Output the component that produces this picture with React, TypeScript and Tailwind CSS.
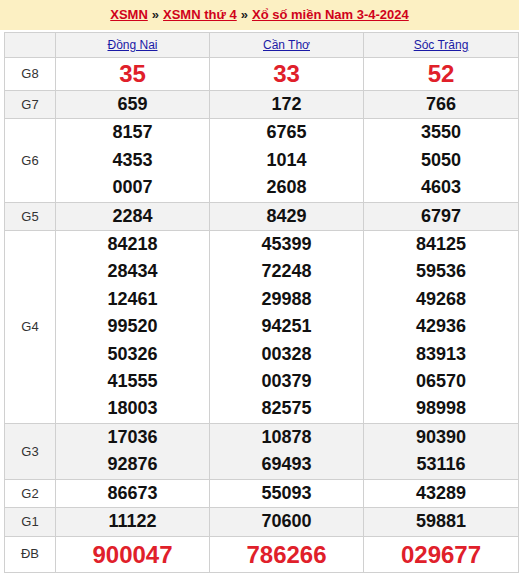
import React from "react";

type Row = {
  label: string;
  values: string[][];
  big?: boolean;
  special?: boolean;
};

const rows: Row[] = [
  { label: "G8", values: [["35"], ["33"], ["52"]], big: true },
  { label: "G7", values: [["659"], ["172"], ["766"]] },
  {
    label: "G6",
    values: [
      ["8157", "4353", "0007"],
      ["6765", "1014", "2608"],
      ["3550", "5050", "4603"],
    ],
  },
  { label: "G5", values: [["2284"], ["8429"], ["6797"]] },
  {
    label: "G4",
    values: [
      ["84218", "28434", "12461", "99520", "50326", "41555", "18003"],
      ["45399", "72248", "29988", "94251", "00328", "00379", "82575"],
      ["84125", "59536", "49268", "42936", "83913", "06570", "98998"],
    ],
  },
  {
    label: "G3",
    values: [
      ["17036", "92876"],
      ["10878", "69493"],
      ["90390", "53116"],
    ],
  },
  { label: "G2", values: [["86673"], ["55093"], ["43289"]] },
  { label: "G1", values: [["11122"], ["70600"], ["59881"]] },
  { label: "ĐB", values: [["900047"], ["786266"], ["029677"]], special: true },
];

const provinces = ["Đồng Nai", "Cần Thơ", "Sóc Trăng"];

export default function App() {
  return (
    <div
      className="w-[519px] h-[576px] bg-white overflow-hidden"
      style={{ fontFamily: '"Liberation Sans", Arial, sans-serif' }}
    >
      {/* Breadcrumb */}
      <div className="h-[30px] bg-[#fcf0c3] flex items-center justify-center text-[13px] font-bold">
        <a href="#" className="text-[#d0021b] underline">XSMN</a>
        <span className="text-[#222] mx-[4px]">»</span>
        <a href="#" className="text-[#d0021b] underline">XSMN thứ 4</a>
        <span className="text-[#222] mx-[4px]">»</span>
        <a href="#" className="text-[#d0021b] underline">Xổ số miền Nam 3-4-2024</a>
      </div>

      {/* Results */}
      <table className="ml-[4px] mt-[2px] w-[514px] border-collapse table-fixed">
        <colgroup>
          <col className="w-[51px]" />
          <col className="w-[154px]" />
          <col className="w-[154px]" />
          <col className="w-[155px]" />
        </colgroup>
        <thead>
          <tr className="bg-[#f2f2f2]">
            <th className="border border-[#d0d0d0] h-[25px] p-0"></th>
            {provinces.map((p) => (
              <th key={p} className="border border-[#d0d0d0] font-normal text-[12px] leading-[24px] p-0">
                <a href="#" className="text-[#1a1aa6] underline">{p}</a>
              </th>
            ))}
          </tr>
        </thead>
        <tbody>
          {rows.map((row, i) => (
            <tr key={row.label} className={i % 2 === 1 ? "bg-[#f2f2f2]" : "bg-white"}>
              <td className="border border-[#d0d0d0] text-center text-[13px] text-[#333] p-0">
                {row.label}
              </td>
              {row.values.map((vals, j) => (
                <td key={j} className="border border-[#d0d0d0] text-center p-0">
                  {vals.map((v) =>
                    row.big ? (
                      <div key={v} className="text-[24px] leading-[32px] font-bold text-[#e0202a]">{v}</div>
                    ) : row.special ? (
                      <div key={v} className="text-[24px] leading-[35px] font-bold text-[#e0202a]">{v}</div>
                    ) : (
                      <div key={v} className="text-[18px] leading-[27.4px] font-bold text-[#111]">{v}</div>
                    )
                  )}
                </td>
              ))}
            </tr>
          ))}
        </tbody>
      </table>
    </div>
  );
}
